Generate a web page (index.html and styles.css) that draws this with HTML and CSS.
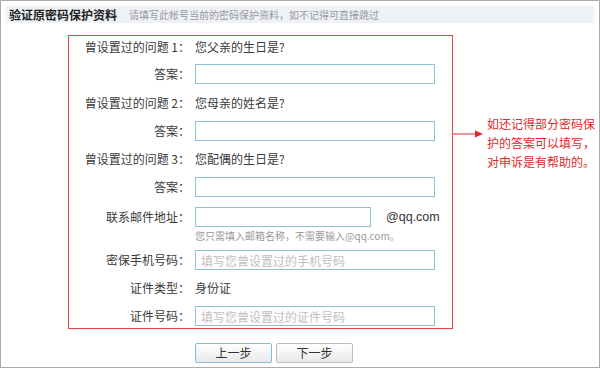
FILE: index.html
```html
<!DOCTYPE html>
<html lang="zh-CN">
<head>
<meta charset="utf-8">
<title>验证原密码保护资料</title>
<link rel="stylesheet" href="styles.css">
</head>
<body>
<div class="frame">
  <div class="header">
    <span class="title">验证原密码保护资料</span>
    <span class="subtitle">请填写此帐号当前的密码保护资料，如不记得可直接跳过</span>
  </div>
  <div class="main">
    <div class="formbox">
      <div class="row r-q1"><span class="lab">曾设置过的问题 1：</span><span class="val">您父亲的生日是?</span></div>
      <div class="row r-a1"><span class="lab">答案：</span><input class="inp" type="text"></div>
      <div class="row r-q2"><span class="lab">曾设置过的问题 2：</span><span class="val">您母亲的姓名是?</span></div>
      <div class="row r-a2"><span class="lab">答案：</span><input class="inp" type="text"></div>
      <div class="row r-q3"><span class="lab">曾设置过的问题 3：</span><span class="val">您配偶的生日是?</span></div>
      <div class="row r-a3"><span class="lab">答案：</span><input class="inp" type="text"></div>
      <div class="row r-email"><span class="lab">联系邮件地址：</span><input class="inp inp-short" type="text"><span class="suffix">@qq.com</span></div>
      <div class="row r-hint"><span class="lab"></span><span class="hint">您只需填入邮箱名称，不需要输入@qq.com。</span></div>
      <div class="row r-phone"><span class="lab">密保手机号码：</span><input class="inp" type="text" placeholder="填写您曾设置过的手机号码"></div>
      <div class="row r-type"><span class="lab">证件类型：</span><span class="val">身份证</span></div>
      <div class="row r-id"><span class="lab">证件号码：</span><input class="inp" type="text" placeholder="填写您曾设置过的证件号码"></div>
    </div>
    <div class="note">
      <svg class="arrow" width="30" height="8" viewBox="0 0 30 8"><line x1="0" y1="4" x2="23" y2="4" stroke="#e02a2a" stroke-width="1"/><polygon points="22,0.5 30,4 22,7.5" fill="#e02a2a"/></svg>
      <p class="note-text">如还记得部分密码保<br>护的答案可以填写，<br>对申诉是有帮助的。</p>
    </div>
  </div>
  <div class="buttons">
    <button class="btn btn-prev" type="button">上一步</button>
    <button class="btn btn-next" type="button">下一步</button>
  </div>
</div>
</body>
</html>
```
FILE: styles.css
```css
* { box-sizing: border-box; }
html, body { margin: 0; padding: 0; background: #fff; }
body {
  font-family: "Noto Sans CJK SC", "Liberation Sans", sans-serif;
  font-size: 12px;
  color: #3a3a3a;
}
.frame {
  width: 600px;
  height: 368px;
  border: 1px solid #ababab;
  background: #fff;
  overflow: hidden;
}
.header {
  margin: 5px 5px 0;
  height: 17px;
  background: #eef1f5;
  display: flex;
  align-items: center;
  padding-left: 3px;
  white-space: nowrap;
}
.title {
  font-size: 12px;
  font-weight: bold;
  color: #222;
  line-height: 17px;
}
.subtitle {
  margin-left: 12px;
  font-size: 10px;
  color: #9a9a9a;
  line-height: 17px;
}
.main {
  margin-top: 12px;
  display: flex;
  align-items: flex-start;
}
.formbox {
  margin-left: 67px;
  width: 385px;
  border: 1px solid #e04848;
  padding: 0 0 2px;
}
.row {
  display: flex;
  align-items: center;
  height: 20px;
  line-height: 20px;
  white-space: nowrap;
}
.lab {
  flex: none;
  width: 121px;
  text-align: right;
  color: #3a3a3a;
}
.val { margin-left: 5px; color: #3a3a3a; }
.inp {
  margin: 0 0 0 5px;
  width: 240px;
  height: 20px;
  border: 1px solid #8ec3d4;
  padding: 0 5px;
  font-family: inherit;
  font-size: 12px;
  color: #333;
  background: #fff;
  outline: none;
}
.inp::placeholder { color: #c0c0c0; }
.inp-short { width: 176px; }
.suffix {
  margin-left: 15px;
  font-family: "Liberation Sans", sans-serif;
  font-size: 12.5px;
  color: #333;
}
.hint {
  margin-left: 5px;
  font-size: 10px;
  color: #999;
}
.r-q1 { margin-top: 1px; }
.r-a1 { margin-top: 7px; }
.r-q2 { margin-top: 9px; }
.r-a2 { margin-top: 8px; }
.r-q3 { margin-top: 8px; }
.r-a3 { margin-top: 8px; }
.r-email { margin-top: 10px; }
.r-hint { margin-top: 2px; height: 14px; line-height: 14px; }
.r-phone { margin-top: 7px; }
.r-type { margin-top: 8px; }
.r-id { margin-top: 8px; }
.note {
  display: flex;
  align-items: flex-start;
  margin-top: 79px;
}
.arrow { display: block; margin-top: 16px; flex: none; }
.note-text {
  margin: 0 0 0 4px;
  font-size: 12px;
  line-height: 19px;
  color: #e02a2a;
  white-space: nowrap;
}
.buttons {
  margin-top: 14px;
  padding-left: 194px;
  display: flex;
  gap: 4px;
}
.btn {
  width: 77px;
  height: 20px;
  padding: 0;
  font-family: inherit;
  font-size: 12px;
  color: #333;
  background: linear-gradient(#ffffff, #e9e9e9);
  border: 1px solid #bdbdbd;
  border-radius: 2px;
  line-height: 18px;
}
.btn-prev { border-color: #8db8d6; }
```
